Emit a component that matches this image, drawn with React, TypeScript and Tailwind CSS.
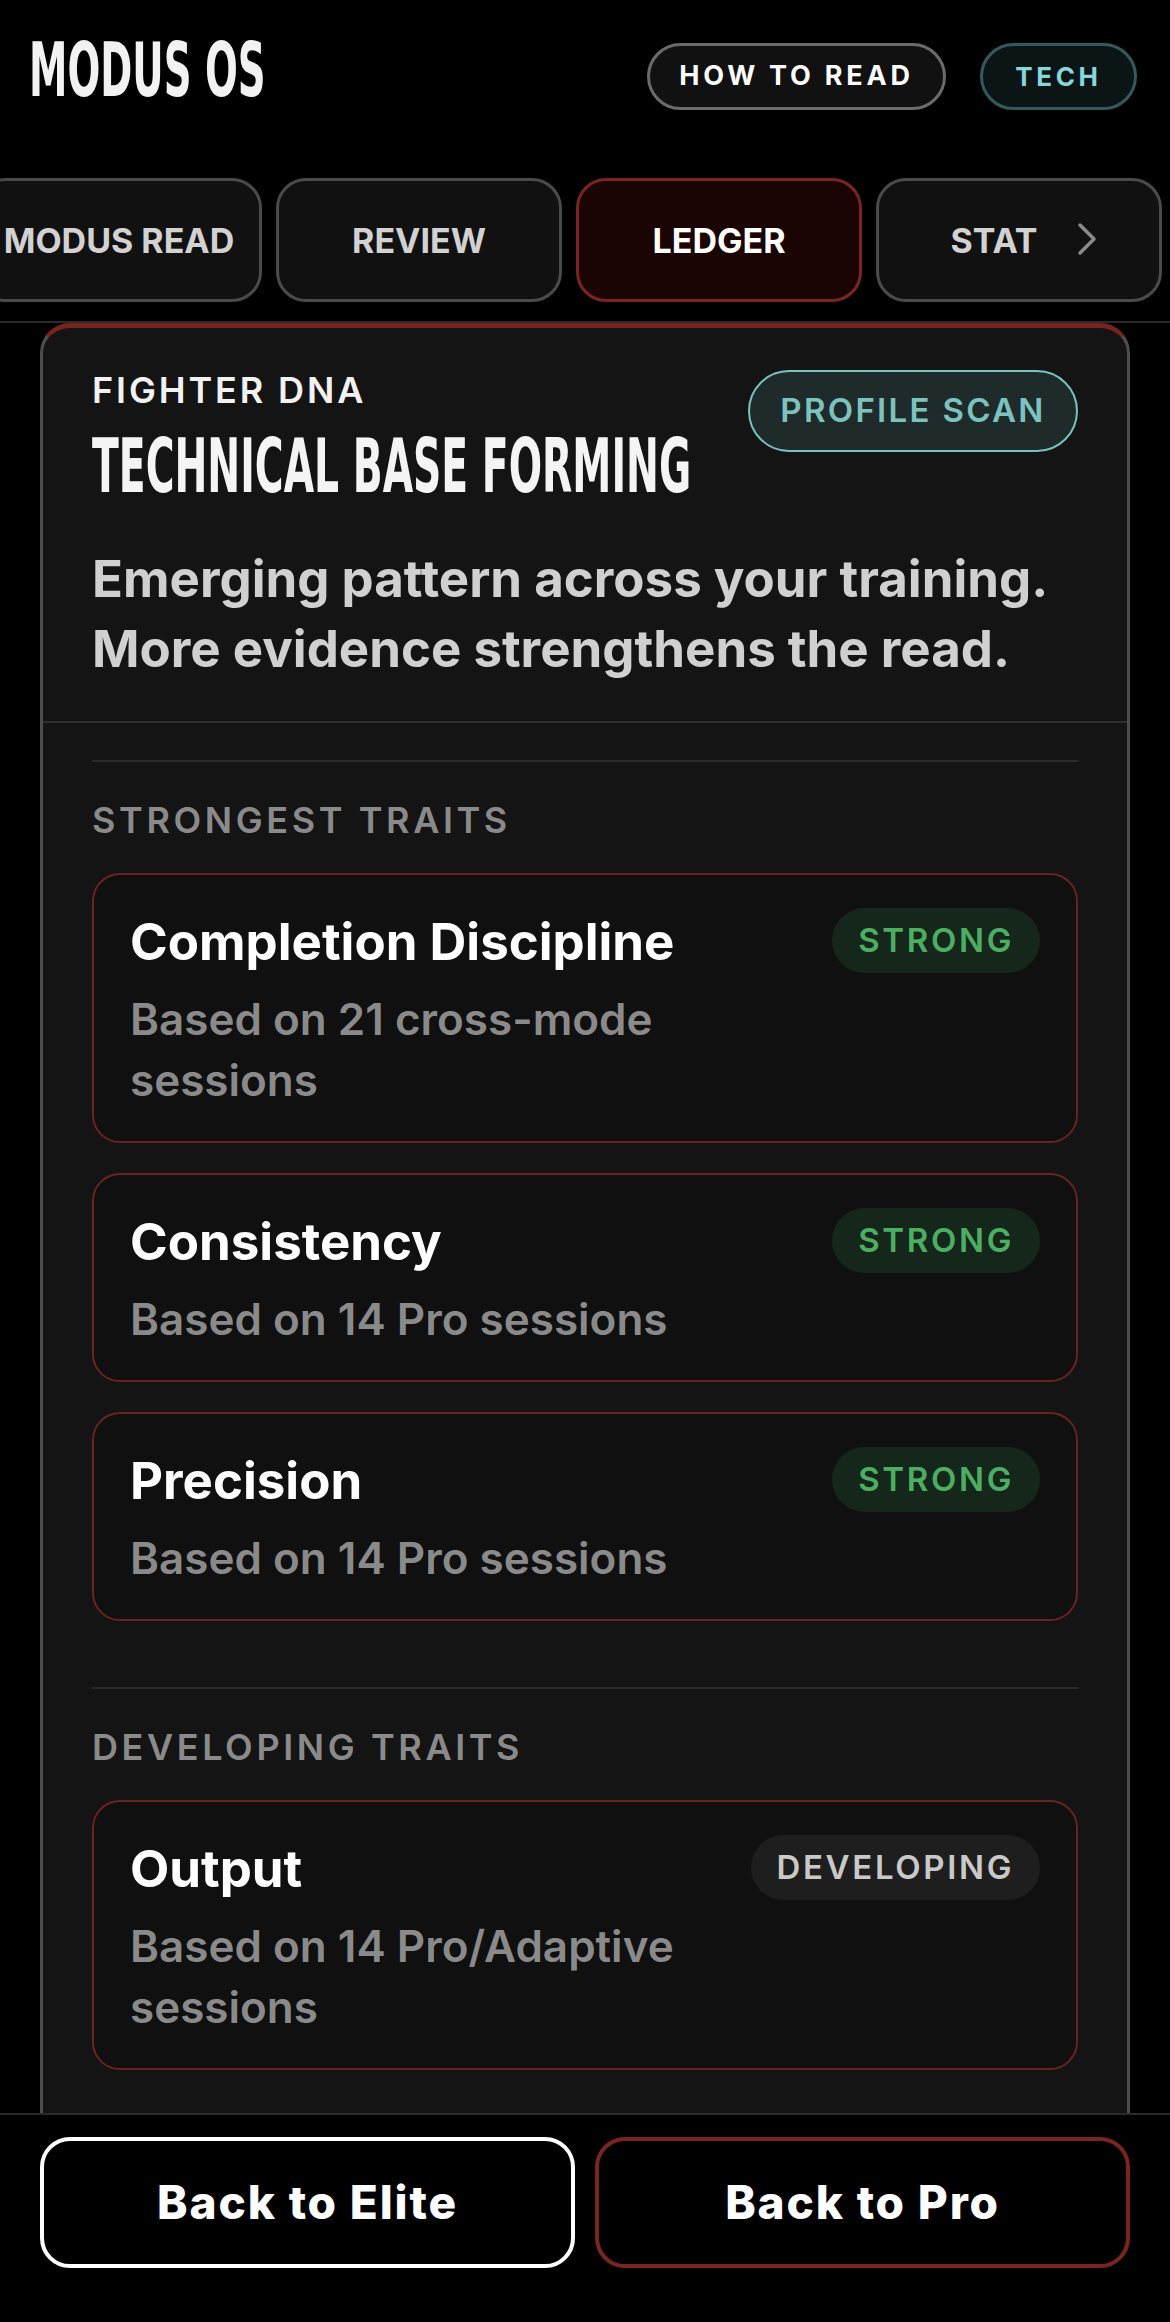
type Trait = {
  name: string;
  basis: string;
  level: "STRONG" | "DEVELOPING";
};

const strongest: Trait[] = [
  { name: "Completion Discipline", basis: "Based on 21 cross-mode sessions", level: "STRONG" },
  { name: "Consistency", basis: "Based on 14 Pro sessions", level: "STRONG" },
  { name: "Precision", basis: "Based on 14 Pro sessions", level: "STRONG" },
];

const developing: Trait[] = [
  { name: "Output", basis: "Based on 14 Pro/Adaptive sessions", level: "DEVELOPING" },
];

const tabs = ["MODUS READ", "REVIEW", "LEDGER", "STAT"];

function TraitCard({ trait }: { trait: Trait }) {
  const strong = trait.level === "STRONG";
  return (
    <div className="flex items-start gap-6 rounded-[28px] border-2 border-[#6a231f] bg-[#101010] pl-[36px] pr-[36px] pt-[33px] pb-[30px]">
      <div className="flex-1 min-w-0 pt-[3px]">
        <div className="text-[51px] leading-[62px] font-bold text-white">{trait.name}</div>
        <div className="mt-[16px] max-w-[600px] text-[44px] leading-[61px] font-semibold text-[#8a8a8a]">
          {trait.basis}
        </div>
      </div>
      <span
        className={
          strong
            ? "shrink-0 h-[65px] px-[26px] rounded-full flex items-center text-[33px] font-semibold tracking-[0.08em] bg-[#15261b] text-[#4cae63]"
            : "shrink-0 h-[65px] px-[26px] rounded-full flex items-center text-[33px] font-semibold tracking-[0.08em] bg-[#1e1e1e] text-[#c9c9c9]"
        }
      >
        {trait.level}
      </span>
    </div>
  );
}

function TraitSection({ label, traits }: { label: string; traits: Trait[] }) {
  return (
    <section>
      <div className="h-[2px] bg-[#2a2a2a]" />
      <div className="mt-[38px] mb-[32px] text-[36px] leading-[41px] font-semibold tracking-[0.1em] text-[#8a8a8a]">
        {label}
      </div>
      <div className="flex flex-col gap-[30px]">
        {traits.map((t) => (
          <TraitCard key={t.name} trait={t} />
        ))}
      </div>
    </section>
  );
}

export default function App() {
  return (
    <div className="w-[1170px] h-[2322px] bg-black flex flex-col overflow-hidden font-['Inter','Noto_Sans',sans-serif]">
      {/* top bar */}
      <header className="h-[178px] shrink-0 flex items-start justify-between pl-[29px] pr-[33px] pt-[33px]">
        <h1 className="whitespace-nowrap origin-left scale-x-[0.58] text-[74px] leading-[74px] text-[#f2f2f2] font-bold font-['Liberation_Sans_Narrow','DejaVu_Sans_Condensed',sans-serif]">
          MODUS OS
        </h1>
        <div className="mt-[10px] flex gap-[34px]">
          <button className="h-[67px] w-[299px] rounded-full border-[3px] border-[#6b6b6b] bg-[#111] text-[27px] font-bold tracking-[0.14em] text-white">
            HOW TO READ
          </button>
          <button className="h-[67px] w-[157px] rounded-full border-[3px] border-[#34595d] bg-[#0b1516] text-[26px] font-bold tracking-[0.14em] text-[#86d6dc]">
            TECH
          </button>
        </div>
      </header>

      {/* tabs */}
      <nav className="shrink-0 overflow-hidden pb-[19px] border-b-2 border-[#2a2a2a]">
        <div className="flex w-max gap-[14px] -ml-[24px]">
          {tabs.map((tab) => {
            const active = tab === "LEDGER";
            return (
              <div
                key={tab}
                className={
                  active
                    ? "w-[286px] h-[124px] shrink-0 rounded-[30px] border-[3px] border-[#7a2520] bg-[#1b0404] flex items-center justify-center text-[34px] font-bold text-white"
                    : tab === "STAT"
                    ? "w-[286px] h-[124px] shrink-0 rounded-[30px] border-[3px] border-[#4a4a4a] bg-[#111] flex items-center justify-center gap-[39px] pl-[9px] text-[34px] font-bold text-[#d2d2d2]"
                    : "w-[286px] h-[124px] shrink-0 rounded-[30px] border-[3px] border-[#4a4a4a] bg-[#111] flex items-center justify-center text-[34px] font-bold text-[#d2d2d2]"
                }
              >
                <span>{tab}</span>
                {tab === "STAT" && (
                  <svg width="20" height="34" viewBox="0 0 20 34" fill="none" className="mt-[-2px]">
                    <path
                      d="M3 3 L17 17 L3 31"
                      stroke="#8a8a8a"
                      strokeWidth="3.5"
                      strokeLinecap="round"
                      strokeLinejoin="round"
                    />
                  </svg>
                )}
              </div>
            );
          })}
        </div>
      </nav>

      {/* scroll area */}
      <main className="flex-1 min-h-0 overflow-hidden">
        <div className="mx-[40px] rounded-t-[30px] border-x-[3px] border-t-[5px] border-[#4d4d4d] border-t-[#7a2420] bg-[#141414]">
          <div className="px-[49px] pt-[42px] pb-[37px] border-b-2 border-[#2e2e2e]">
            <div className="flex items-start gap-6">
              <div className="flex-1 min-w-0">
                <div className="text-[36px] leading-[41px] font-semibold tracking-[0.08em] text-[#f2f2f2]">
                  FIGHTER DNA
                </div>
                <div className="mt-[18px] whitespace-nowrap origin-left scale-x-[0.59] text-[74px] leading-[74px] text-[#f4f4f4] font-bold font-['Liberation_Sans_Narrow','DejaVu_Sans_Condensed',sans-serif]">
                  TECHNICAL BASE FORMING
                </div>
              </div>
              <span className="shrink-0 h-[82px] w-[330px] rounded-full border-2 border-[#79c2bf] bg-[#1f2b2b] flex items-center justify-center text-[33px] font-semibold tracking-[0.07em] text-[#7cc3c0]">
                PROFILE SCAN
              </span>
            </div>
            <p className="mt-[41px] text-[51px] leading-[70px] font-bold text-[#d0d0d0]">
              Emerging pattern across your training. More evidence strengthens the read.
            </p>
          </div>

          <div className="px-[49px] pt-[37px] flex flex-col gap-[66px] pb-[80px]">
            <TraitSection label="STRONGEST TRAITS" traits={strongest} />
            <TraitSection label="DEVELOPING TRAITS" traits={developing} />
          </div>
        </div>
      </main>

      {/* bottom actions */}
      <footer className="h-[209px] shrink-0 border-t-2 border-[#2a2a2a] bg-black px-[40px] pt-[22px] flex gap-[20px]">
        <button className="flex-1 h-[131px] rounded-[30px] border-[4px] border-white bg-black text-[46px] font-extrabold tracking-[0.04em] text-white">
          Back to Elite
        </button>
        <button className="flex-1 h-[131px] rounded-[30px] border-[4px] border-[#7a2520] bg-black text-[46px] font-extrabold tracking-[0.04em] text-white">
          Back to Pro
        </button>
      </footer>
    </div>
  );
}
